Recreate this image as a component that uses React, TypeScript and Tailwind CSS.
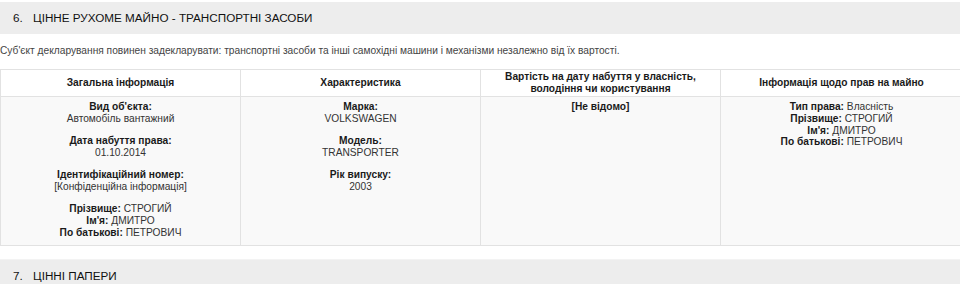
import React from "react";

const B = ({ children }: { children: React.ReactNode }) => (
  <span className="font-bold text-[#1a1a1a]">{children}</span>
);

function Block({ label, value }: { label: string; value: string }) {
  return (
    <div>
      <div className="font-bold text-[#1a1a1a]">{label}</div>
      <div>{value}</div>
    </div>
  );
}

export default function App() {
  return (
    <div className="w-[960px] h-[284px] overflow-hidden bg-white font-['Liberation_Sans',Arial,sans-serif] text-[#333]">
      <div className="mt-[2px] h-[32px] bg-[#ededed] flex items-center pl-[13px] text-[11.7px] text-[#111]">
        <span className="w-[20px]">6.</span>
        <span>ЦІННЕ РУХОМЕ МАЙНО - ТРАНСПОРТНІ ЗАСОБИ</span>
      </div>
      <div className="mt-[10px] text-[10.2px] leading-[14px] text-[#444]">
        Суб'єкт декларування повинен задекларувати: транспортні засоби та інші самохідні машини і механізми незалежно від їх вартості.
      </div>
      <div className="mt-[11px] w-[961px] border border-[#e2e2e2] text-[10.2px] leading-[11.8px]">
        <div className="grid grid-cols-[240px_240px_240px_241px] h-[27px] bg-white border-b border-[#e2e2e2] font-bold text-[#1a1a1a] text-center">
          <div className="flex items-center justify-center border-r border-[#e2e2e2]">Загальна інформація</div>
          <div className="flex items-center justify-center border-r border-[#e2e2e2]">Характеристика</div>
          <div className="flex items-center justify-center border-r border-[#e2e2e2]">
            Вартість на дату набуття у власність,
            <br />
            володіння чи користування
          </div>
          <div className="flex items-center justify-center">Інформація щодо прав на майно</div>
        </div>
        <div className="grid grid-cols-[240px_240px_240px_241px] h-[148px] bg-[#f9f9f9] text-center">
          <div className="border-r border-[#e2e2e2] pt-[4px] flex flex-col gap-[10.5px]">
            <Block label="Вид об'єкта:" value="Автомобіль вантажний" />
            <Block label="Дата набуття права:" value="01.10.2014" />
            <Block label="Ідентифікаційний номер:" value="[Конфіденційна інформація]" />
            <div>
              <div><B>Прізвище:</B> СТРОГИЙ</div>
              <div><B>Ім'я:</B> ДМИТРО</div>
              <div><B>По батькові:</B> ПЕТРОВИЧ</div>
            </div>
          </div>
          <div className="border-r border-[#e2e2e2] pt-[4px] flex flex-col gap-[10.5px]">
            <Block label="Марка:" value="VOLKSWAGEN" />
            <Block label="Модель:" value="TRANSPORTER" />
            <Block label="Рік випуску:" value="2003" />
          </div>
          <div className="border-r border-[#e2e2e2] pt-[4px]">
            <B>[Не відомо]</B>
          </div>
          <div className="pt-[4px]">
            <div><B>Тип права:</B> Власність</div>
            <div><B>Прізвище:</B> СТРОГИЙ</div>
            <div><B>Ім'я:</B> ДМИТРО</div>
            <div><B>По батькові:</B> ПЕТРОВИЧ</div>
          </div>
        </div>
      </div>
      <div className="mt-[13px] h-[32px] bg-[#ededed] border-t border-[#f3f3f3] flex items-center pl-[13px] text-[11.7px] text-[#111]">
        <span className="w-[20px]">7.</span>
        <span>ЦІННІ ПАПЕРИ</span>
      </div>
    </div>
  );
}
